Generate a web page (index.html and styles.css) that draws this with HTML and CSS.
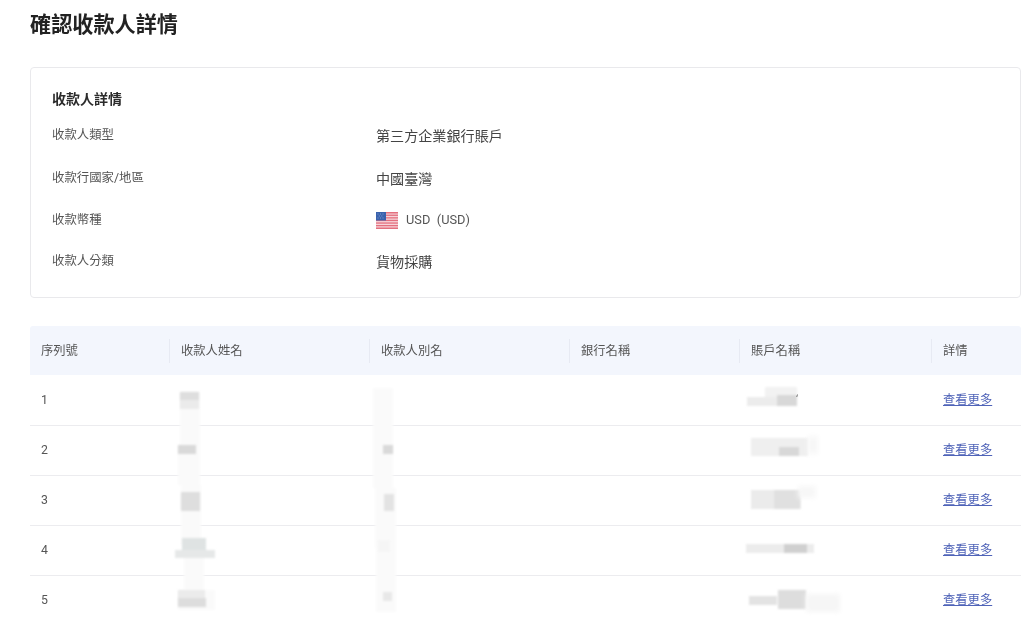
FILE: index.html
```html
<!DOCTYPE html>
<html lang="zh-Hant">
<head>
<meta charset="utf-8">
<title>確認收款人詳情</title>
<link rel="stylesheet" href="styles.css">
</head>
<body>
<main class="page">
  <h1 class="page-title">確認收款人詳情</h1>
  <section class="card">
    <h2 class="card-title">收款人詳情</h2>
    <dl class="details">
      <div class="detail"><dt>收款人類型</dt><dd>第三方企業銀行賬戶</dd></div>
      <div class="detail"><dt>收款行國家/地區</dt><dd>中國臺灣</dd></div>
      <div class="detail"><dt>收款幣種</dt><dd class="currency">
        <svg class="flag" viewBox="0 0 22 17" aria-hidden="true">
          <rect width="22" height="17" rx="1.5" fill="#f6d5da"/>
          <g fill="#e4707f">
            <rect y="0" width="22" height="1.5"/><rect y="2.6" width="22" height="1.3"/><rect y="5.2" width="22" height="1.3"/><rect y="7.8" width="22" height="1.3"/><rect y="10.4" width="22" height="1.3"/><rect y="13" width="22" height="1.3"/><rect y="15.5" width="22" height="1.5"/>
          </g>
          <rect width="10" height="8.5" fill="#3a62ad"/>
          <g fill="#7f9bd0"><rect x="1.5" y="1.5" width="1" height="1"/><rect x="4" y="1.5" width="1" height="1"/><rect x="6.5" y="1.5" width="1" height="1"/><rect x="2.8" y="3.5" width="1" height="1"/><rect x="5.3" y="3.5" width="1" height="1"/><rect x="1.5" y="5.5" width="1" height="1"/><rect x="4" y="5.5" width="1" height="1"/><rect x="6.5" y="5.5" width="1" height="1"/></g>
        </svg>
        <span>USD&ensp;(USD)</span></dd></div>
      <div class="detail"><dt>收款人分類</dt><dd>貨物採購</dd></div>
    </dl>
  </section>
  <section class="table">
    <div class="row head">
      <div class="cell">序列號</div><div class="cell">收款人姓名</div><div class="cell">收款人別名</div><div class="cell">銀行名稱</div><div class="cell">賬戶名稱</div><div class="cell">詳情</div>
    </div>
    <div class="row"><div class="cell">1</div><div class="cell"></div><div class="cell"></div><div class="cell"></div><div class="cell"></div><div class="cell"><a href="#">查看更多</a></div></div>
    <div class="row"><div class="cell">2</div><div class="cell"></div><div class="cell"></div><div class="cell"></div><div class="cell"></div><div class="cell"><a href="#">查看更多</a></div></div>
    <div class="row"><div class="cell">3</div><div class="cell"></div><div class="cell"></div><div class="cell"></div><div class="cell"></div><div class="cell"><a href="#">查看更多</a></div></div>
    <div class="row"><div class="cell">4</div><div class="cell"></div><div class="cell"></div><div class="cell"></div><div class="cell"></div><div class="cell"><a href="#">查看更多</a></div></div>
    <div class="row"><div class="cell">5</div><div class="cell"></div><div class="cell"></div><div class="cell"></div><div class="cell"></div><div class="cell"><a href="#">查看更多</a></div></div>
    <svg class="smudges" viewBox="30 326 991 300" aria-hidden="true">
      <defs>
        <filter id="soft" x="-30%" y="-30%" width="160%" height="160%"><feGaussianBlur stdDeviation="1.2"/></filter>
        <filter id="softer" x="-40%" y="-40%" width="180%" height="180%"><feGaussianBlur stdDeviation="2.5"/></filter>
      </defs>
      <g filter="url(#soft)" fill="#fafafa">
        <rect x="180" y="392" width="20" height="60"/><rect x="178" y="445" width="22" height="40"/><rect x="181" y="485" width="20" height="60"/><rect x="184" y="545" width="20" height="50"/><rect x="178" y="590" width="37" height="20"/>
        <rect x="373" y="388" width="20" height="100"/><rect x="375" y="488" width="21" height="60"/><rect x="376" y="548" width="20" height="64"/>
      </g>
      <g filter="url(#soft)">
        <rect x="180" y="392" width="19" height="9" fill="#dedede"/><rect x="180" y="400" width="19" height="9" fill="#ebebeb"/>
        <rect x="178" y="445" width="18" height="9" fill="#d9d9d9"/>
        <rect x="181" y="492" width="19" height="19" fill="#dedede"/>
        <rect x="182" y="538" width="24" height="20" fill="#dfe3e3"/><rect x="175" y="550" width="40" height="8" fill="#e6e8e8"/>
        <rect x="178" y="590" width="27" height="9" fill="#ebebeb"/><rect x="178" y="598" width="28" height="9" fill="#dddddd"/>
        <rect x="383" y="445" width="10" height="9" fill="#d9d9d9"/>
        <rect x="384" y="494" width="10" height="17" fill="#e3e3e3"/>
        <rect x="378" y="540" width="12" height="12" fill="#f5f5f5"/>
        <rect x="383" y="592" width="9" height="9" fill="#e8e8e8"/>
        <rect x="765" y="387" width="32" height="11" fill="#f2f2f2"/><rect x="747" y="397" width="30" height="9" fill="#ececec"/><rect x="777" y="395" width="20" height="11" fill="#d8d8d8"/>
        <rect x="751" y="438" width="57" height="18" fill="#efefef"/><rect x="779" y="447" width="20" height="9" fill="#d8d8d8"/>
        <rect x="751" y="490" width="50" height="19" fill="#ebebeb"/><rect x="774" y="490" width="26" height="19" fill="#e0e0e0"/>
        <rect x="746" y="544" width="68" height="9" fill="#ececec"/><rect x="784" y="544" width="23" height="9" fill="#d0d0d0"/>
        <rect x="749" y="596" width="28" height="9" fill="#e3e3e3"/><rect x="778" y="590" width="28" height="19" fill="#dddddd"/>
      </g>
      <rect x="806" y="594" width="34" height="18" fill="#f6f6f6" filter="url(#softer)"/>
      <rect x="808" y="436" width="10" height="18" fill="#f7f7f7" filter="url(#softer)"/>
      <rect x="798" y="486" width="18" height="12" fill="#f7f7f7" filter="url(#softer)"/>
      <path d="M797.5 394.5l-.8 2.5" stroke="#555" stroke-width=".8"/>
    </svg>
  </section>
</main>
</body>
</html>
```
FILE: styles.css
```css
* { box-sizing: border-box; }
html, body { margin: 0; height: 100%; overflow: hidden; background: #fff; }
body {
  font-family: Roboto, "Noto Sans CJK TC", "Noto Sans CJK SC", sans-serif;
  color: #444;
}
.page {
  display: flex;
  flex-direction: column;
  align-items: flex-start;
  padding: 11px 3px 0 30px;
  filter: blur(0.35px);
}
.page-title {
  margin: 0 0 28px;
  font-size: 21.15px;
  line-height: 28px;
  font-weight: 700;
  color: #222;
}
.card {
  width: 991px;
  height: 231px;
  border: 1px solid #e9e9ec;
  border-radius: 4px;
  padding: 21px 21px 0;
}
.card-title {
  margin: 0 0 17px;
  font-size: 14px;
  line-height: 20px;
  font-weight: 700;
  color: #2b2b2b;
}
.details { margin: 0; display: flex; flex-direction: column; }
.detail {
  display: flex;
  align-items: flex-start;
  height: 42px;
}
.detail:first-child { height: 43px; }
.detail:nth-child(3) { height: 41px; }
.detail dt {
  width: 324px;
  font-size: 12.4px;
  line-height: 18px;
  color: #555;
}
.detail dd {
  margin: 1px 0 0;
  font-size: 14.1px;
  line-height: 18px;
  color: #444;
}
.detail .currency {
  display: flex;
  align-items: center;
  gap: 8px;
  margin-top: 0;
  font-size: 12.8px;
  color: #555;
}
.flag { width: 22px; height: 17px; display: block; }
.table {
  position: relative;
  width: 991px;
  margin-top: 28px;
}
.row {
  display: grid;
  grid-template-columns: 140px 200px 200px 170px 192px 89px;
  height: 50px;
  border-bottom: 1px solid #ececef;
  align-items: center;
}
.row .cell { padding-bottom: 2px; }
.row.head {
  height: 49px;
  background: #f3f6fd;
  border-bottom: 0;
  border-radius: 3px 3px 0 0;
  margin-bottom: 1px;
}
.row.head .cell { padding-bottom: 0; }
.cell {
  padding-left: 11px;
  font-size: 12.3px;
  line-height: 18px;
  color: #555;
  position: relative;
}
.head .cell + .cell::before {
  content: "";
  position: absolute;
  left: -1px;
  top: -3px;
  height: 24px;
  border-left: 1px solid #e7eaf3;
}
.cell a { color: #4f63b8; text-decoration: underline; }
.smudges {
  position: absolute;
  left: 0;
  top: 0;
  width: 991px;
  height: 300px;
  overflow: visible;
  pointer-events: none;
}
```
